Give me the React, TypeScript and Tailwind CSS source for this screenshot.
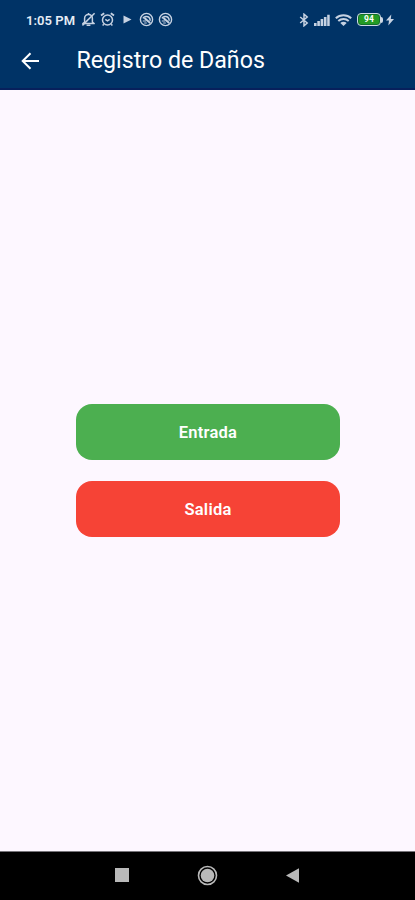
interface Action {
  label: string
  className: string
}

const actions: Action[] = [
  { label: 'Entrada', className: 'bg-[#4caf50]' },
  { label: 'Salida', className: 'bg-[#f64336]' },
]

function BellOffIcon() {
  return (
    <svg className="w-[15px] h-[15px]" viewBox="0 0 15 15" fill="none" stroke="currentColor" strokeWidth="1.5">
      <path d="M3.6 10.2V6.4a3.9 3.9 0 0 1 7.8 0v3.8l1.8 1.3H1.8z" strokeLinejoin="round" />
      <path d="M5.6 13.3h3.8M7.5 1v1.6" />
      <path d="M1.4 13.4 13.6 1.2" strokeWidth="1.5" />
    </svg>
  )
}

function AlarmIcon() {
  return (
    <svg className="w-[15px] h-[15px]" viewBox="0 0 15 15" fill="none" stroke="currentColor" strokeWidth="1.5">
      <circle cx="7.5" cy="8" r="5" />
      <path d="M1 3.6 4.2 1.3M14 3.6l-3.2-2.3" strokeWidth="1.9" />
      <path d="M5.3 7.4 7.5 8.8l2.2-1.4M3.8 12.2l-1.2 1.3M11.2 12.2l1.2 1.3" />
    </svg>
  )
}

function BlockedIcon() {
  return (
    <svg className="w-[15px] h-[15px]" viewBox="0 0 15 15" fill="none" stroke="currentColor">
      <circle cx="7.5" cy="7.5" r="6.1" strokeWidth="1.4" />
      <path d="M4 6.4C5 4.3 8.4 3.8 10 5.4c.9.9 1.2 2.1 1.2 3.4" strokeWidth="1.5" />
      <path d="m5.4 6 5.8 5" strokeWidth="2" />
      <path d="M3.8 9h3.4M5.2 11h2.6" strokeWidth="1.2" />
    </svg>
  )
}

function StatusBar() {
  return (
    <div className="flex h-[39px] items-center pl-[26px] pr-[21px] text-[#c6d2e2]">
      <span className="w-[55px] whitespace-nowrap pt-px text-[13px] font-semibold leading-none tracking-[0.05px] text-[#e6edf5]">1:05 PM</span>
      <div className="flex items-center">
        <BellOffIcon />
        <span className="ml-[4px]"><AlarmIcon /></span>
        <svg className="ml-[8px] h-[9px] w-[9px]" viewBox="0 0 9 9" fill="currentColor">
          <path d="M.5.5 8.5 4.5l-8 4z" />
        </svg>
        <span className="ml-[7px]"><BlockedIcon /></span>
        <span className="ml-[4px]"><BlockedIcon /></span>
      </div>
      <div className="ml-auto flex items-center">
        <svg className="h-[14px] w-[10px]" viewBox="0 0 10 14" fill="none" stroke="currentColor" strokeWidth="1.5">
          <path d="m1.2 4 7 6L5 12.8V1.2L8.2 4l-7 6" />
        </svg>
        <svg className="ml-[5px] h-[12px] w-[16px]" viewBox="0 0 16 12" fill="currentColor">
          <path d="M0 9h2.6v3H0zM3.3 7h2.6v5H3.3zM6.6 5h2.6v7H6.6zM9.9 3h2.6v9H9.9zM13.2.7h2.5V12h-2.5z" />
        </svg>
        <svg className="ml-[5px] h-[12px] w-[17px]" viewBox="0 0 17 12" fill="none" stroke="currentColor" strokeWidth="2">
          <path d="M.8 4.2C5.2.2 11.8.2 16.2 4.2M3.3 7c3-2.7 7.4-2.7 10.4 0" />
          <path d="M5.3 8.9c1.8-1.5 4.6-1.5 6.4 0L8.5 12z" fill="currentColor" stroke="none" />
        </svg>
        <div className="ml-[5px] flex items-center">
          <div className="flex h-[13px] w-[24px] rounded-[4px] border-[1.5px] border-[#cfd9e6] bg-[#12702b] p-px">
            <div className="flex w-full items-center justify-center rounded-[2px] bg-[#249b24] text-[8.5px] font-bold leading-none text-white">94</div>
          </div>
          <div className="h-[6px] w-[2px] rounded-r-sm bg-[#cfd9e6]" />
        </div>
        <svg className="ml-[3px] h-[12px] w-[8px]" viewBox="0 0 8 12" fill="currentColor">
          <path d="M5.3.5 0 6.6h3L2.3 11.5 8 5.1H4.8z" />
        </svg>
      </div>
    </div>
  )
}

function AppBar() {
  return (
    <div className="flex h-[49px] items-center pb-[5px] pl-[21px]">
      <svg className="h-[18px] w-[19px]" viewBox="0 0 19 18" fill="none" stroke="#fff" strokeWidth="2">
        <path d="M18 9H2M9.5 1.2 1.7 9l7.8 7.8" />
      </svg>
      <h1 className="ml-[36.5px] whitespace-nowrap pb-px text-[23.2px] leading-none text-white">Registro de Daños</h1>
    </div>
  )
}

function NavBar() {
  return (
    <nav className="flex h-[49px] items-center border-t border-[#77747a] bg-black pb-[2px] pl-[115px] text-[#b9b9b9]">
      <div className="h-[14px] w-[14px] bg-[#b9b9b9]" />
      <svg className="ml-[68px] h-[21px] w-[21px]" viewBox="0 0 21 21">
        <circle cx="10.5" cy="10.5" r="9" fill="none" stroke="currentColor" strokeWidth="1.6" />
        <circle cx="10.5" cy="10.5" r="6.8" fill="currentColor" />
      </svg>
      <svg className="ml-[68px] h-[15px] w-[13px]" viewBox="0 0 13 15" fill="currentColor">
        <path d="M13 .2v14.6L0 7.5z" />
      </svg>
    </nav>
  )
}

export default function App() {
  return (
    <div className="flex h-[900px] w-[415px] flex-col overflow-hidden bg-[#fdf7ff] font-[Roboto,sans-serif]">
      <header className="h-[90px] shrink-0 border-b-2 border-[#07205c] bg-[#003366]">
        <StatusBar />
        <AppBar />
      </header>
      <main className="flex flex-1 flex-col items-center justify-center gap-[21px] pl-px">
        {actions.map((action) => (
          <button
            key={action.label}
            className={`h-[56px] w-[264px] rounded-[16px] pt-[2px] text-[16.5px] font-semibold tracking-[0.25px] text-white ${action.className}`}
          >
            {action.label}
          </button>
        ))}
      </main>
      <NavBar />
    </div>
  )
}
